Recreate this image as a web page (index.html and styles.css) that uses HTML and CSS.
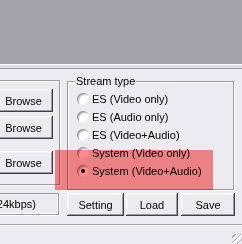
FILE: index.html
```html
<!DOCTYPE html>
<html>
    <head>
        <title>Stream settings</title>
        <link rel="stylesheet" href="styles.css">
    </head>
    <body>
        <div class="top"></div>
        <div class="rule"></div>

        <div class="main">
            <div class="left">
                <div class="frame">
                    <button class="btn browse">Browse</button>
                    <button class="btn browse">Browse</button>
                    <button class="btn browse far">Browse</button>
                </div>
            </div>

            <div class="group">
                <div class="legend">Stream type</div>
                <div class="opt"><span class="radio"></span>ES (Video only)</div>
                <div class="opt"><span class="radio"></span>ES (Audio only)</div>
                <div class="opt"><span class="radio"></span>ES (Video+Audio)</div>
                <div class="opt"><span class="radio"></span>System (Video only)</div>
                <div class="opt"><span class="radio on"></span>System (Video+Audio)</div>
            </div>
        </div>

        <div class="bottom">
            <div class="field"><span>Audio (MPEG-1 Layer II, 224kbps)</span></div>
            <button class="btn setting">Setting</button>
            <button class="btn load">Load</button>
            <button class="btn save">Save</button>
        </div>

        <div class="status">
            <span class="grip"></span>
        </div>
        <div class="taskbar"></div>

        <!-- marker drawn over the selected option -->
        <div class="highlight"></div>
    </body>
</html>
```

FILE: styles.css
```css
html, body {
    margin: 0;
    padding: 0;
}

body {
    width: 242px;
    height: 244px;
    overflow: hidden;
    position: relative;
    background-color: #ecebef;
    font-family: "Liberation Sans", Arial, sans-serif;
    font-size: 11px;
    color: #000;
}

.top {
    height: 64px;
    background-color: #a4a3a8;
}

.rule {
    height: 3px;
    border-top: 1px solid #fbfbfc;
    border-bottom: 1px solid #9c9ba0;
    background-color: #dedde2;
}

.main {
    display: flex;
    flex-direction: row;
    height: 123px;
}

/* etched frame: dark line, white line one pixel down/right */
.left {
    margin-left: -30px;
    width: 90px;
    margin-right: 7px;
    padding-top: 11px;
}

.frame {
    box-sizing: border-box;
    width: 90px;
    height: 105px;
    border: 1px solid #9d9ca1;
    box-shadow: inset 1px 1px 0 #fff, 1px 1px 0 #fff;
    display: flex;
    flex-direction: column;
    align-items: flex-end;
    padding: 8px 6px 0 0;
}

.btn {
    box-sizing: border-box;
    height: 23px;
    padding: 0;
    border: none;
    background-color: #ecebef;
    font-family: inherit;
    font-size: 11px;
    color: #000;
    box-shadow: inset -1px -1px 0 #404040, inset 1px 1px 0 #fff, inset -2px -2px 0 #9d9ca1, inset 2px 2px 0 #f4f4f6;
}

.browse {
    width: 59px;
    margin-bottom: 4px;
}

.browse.far {
    margin-top: 8px;
}

.group {
    box-sizing: border-box;
    width: 167px;
    height: 109px;
    margin-top: 12px;
    border: 1px solid #9d9ca1;
    box-shadow: inset 1px 1px 0 #fff, 1px 1px 0 #fff;
}

.legend {
    width: fit-content;
    margin: -7px 0 2px 7px;
    padding: 0 1px;
    line-height: 13px;
    background-color: #ecebef;
}

.opt {
    display: flex;
    align-items: center;
    height: 18px;
    white-space: nowrap;
}

.radio {
    box-sizing: border-box;
    width: 12px;
    height: 12px;
    margin: 0 3px 0 9px;
    border-radius: 50%;
    background-color: #fff;
    box-shadow: inset 1px 1px 0 #9d9ca1, inset -1px -1px 0 #f2f2f4, inset 2px 2px 0 #c8c7cc;
    display: flex;
    align-items: center;
    justify-content: center;
}

.radio.on::after {
    content: "";
    width: 4px;
    height: 4px;
    border-radius: 50%;
    background-color: #000;
}

.bottom {
    display: flex;
    flex-direction: row;
    align-items: flex-start;
    height: 31px;
    padding-top: 1px;
}

.field {
    box-sizing: border-box;
    width: 100px;
    margin-left: -41px;
    margin-right: 8px;
    height: 22px;
    padding-right: 22px;
    display: flex;
    align-items: center;
    justify-content: flex-end;
    white-space: nowrap;
    overflow: hidden;
    border: 1px solid #9d9ca1;
    box-shadow: inset -1px -1px 0 #fff, 1px 1px 0 #fff;
}

.field > span {
    flex-shrink: 0;
}

.setting {
    width: 57px;
    margin-right: 2px;
}

.load {
    width: 52px;
    margin-right: 3px;
}

.save {
    width: 54px;
}

.status {
    height: 19px;
    border-top: 1px solid #a4a3a8;
    box-shadow: inset 0 1px 0 #fff;
    display: flex;
    justify-content: flex-end;
    align-items: flex-end;
}

.grip {
    width: 10px;
    height: 10px;
    background: repeating-linear-gradient(135deg, transparent 0 2px, #a4a3a8 2px 3px, #fff 3px 4px);
}

.taskbar {
    height: 1px;
    background-color: #1f2f78;
}

.highlight {
    position: absolute;
    left: 55px;
    top: 150px;
    width: 158px;
    height: 40px;
    background-color: #ff8c8c;
    mix-blend-mode: multiply;
}
```
